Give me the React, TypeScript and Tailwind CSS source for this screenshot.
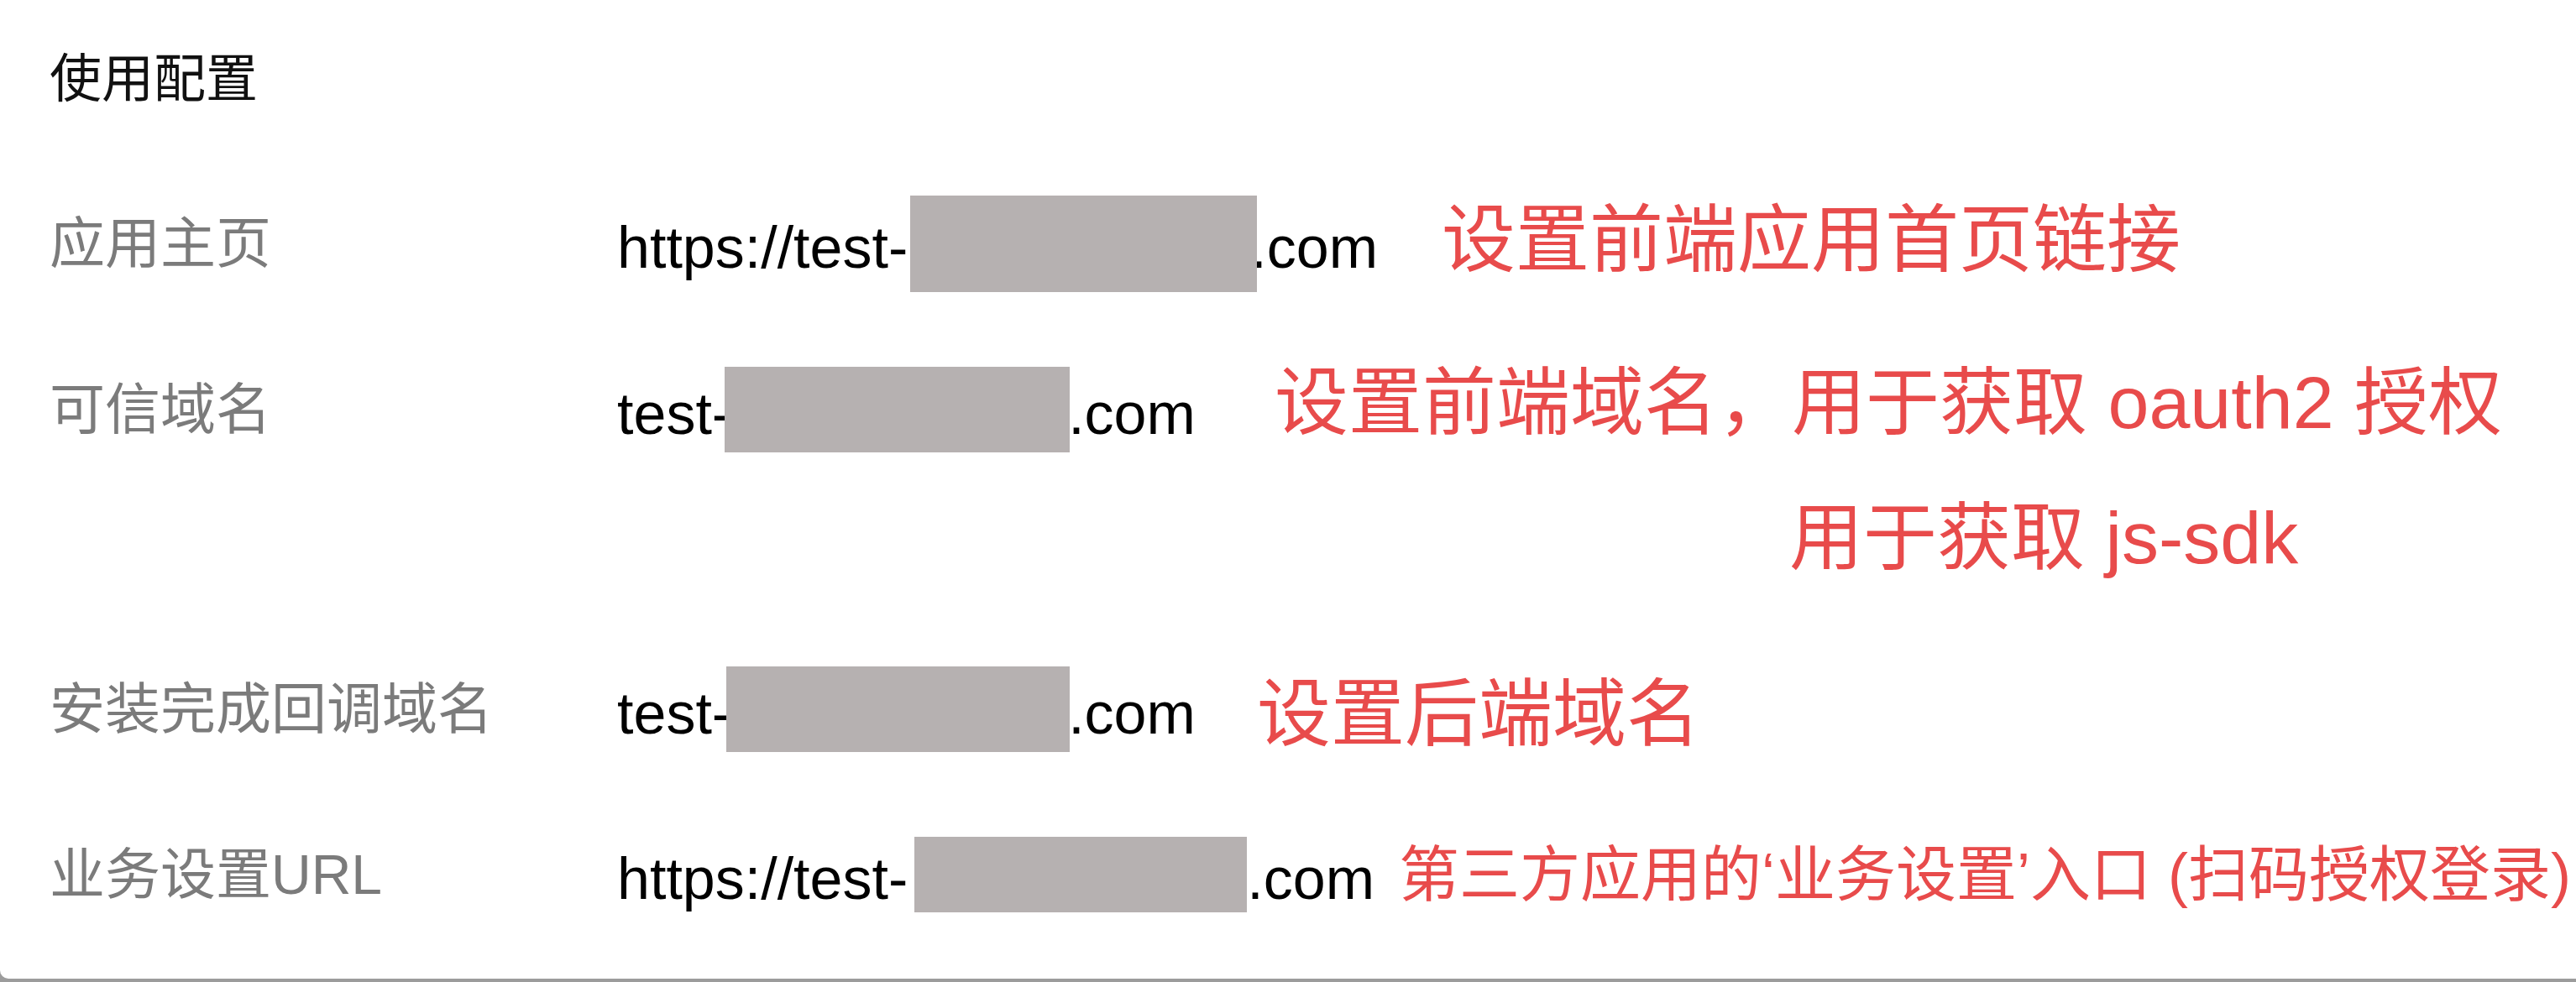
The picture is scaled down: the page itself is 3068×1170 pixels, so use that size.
import React from 'react';

const FONT = "font-['Liberation_Sans','Noto_Sans_CJK_SC',sans-serif]";

interface RowProps {
  label: string;
  prefix: string;
  mask: string;
  valueW: string;
  note: React.ReactNode;
  rowClass: string;
}

const ConfigRow: React.FC<RowProps> = ({ label, prefix, mask, valueW, note, rowClass }) => (
  <div className={`flex items-center h-[120px] ${rowClass}`}>
    <div className="w-[676px] shrink-0 text-[66px] leading-none text-[#7b7b7b]">{label}</div>
    <div className={`${valueW} shrink-0 flex items-center text-[70px] leading-none text-black`}>
      <span className="pt-[10px]">{prefix}</span>
      {/* masked domain */}
      <div className={`${mask} bg-[#b6b1b1] shrink-0 relative z-10`} />
      <span className="pt-[10px]">.com</span>
    </div>
    {note}
  </div>
);

export default function App() {
  return (
    <div className={`${FONT} w-[3068px] h-[1170px] bg-[#9c9c9c] overflow-hidden`}>
      <div className="h-[1166px] bg-white rounded-bl-[10px] pl-[59px] flex flex-col whitespace-nowrap">
        <div className="h-[190px] flex items-center text-[62px] leading-none text-[#111]">使用配置</div>

        <ConfigRow
          rowClass="mt-[40px]"
          label="应用主页"
          prefix="https://test-"
          mask="ml-[3px] -mr-[8px] w-[413px] h-[115px]"
          valueW="w-[982px]"
          note={<span className="text-[88px] leading-none text-[#e84b4b] -translate-y-[4px]">设置前端应用首页链接</span>}
        />

        <ConfigRow
          rowClass="mt-[78px]"
          label="可信域名"
          prefix="test-"
          mask="-ml-[8px] -mr-[2px] w-[411px] h-[102px]"
          valueW="w-[783px]"
          note={<span className="text-[88px] leading-none text-[#e84b4b] -translate-y-[8px]">设置前端域名，用于获取 oauth2 授权</span>}
        />

        <div className="flex items-center h-[120px] mt-[33px]">
          <div className="w-[2072px] shrink-0" />
          <span className="text-[88px] leading-none text-[#e84b4b]">用于获取 js-sdk</span>
        </div>

        <ConfigRow
          rowClass="mt-[84px]"
          label="安装完成回调域名"
          prefix="test-"
          mask="-ml-[6px] -mr-[2px] w-[409px] h-[102px]"
          valueW="w-[762px]"
          note={<span className="text-[88px] leading-none text-[#e84b4b] translate-y-[6px]">设置后端域名</span>}
        />

        <ConfigRow
          rowClass="mt-[77px]"
          label="业务设置URL"
          prefix="https://test-"
          mask="ml-[8px] w-[396px] h-[90px]"
          valueW="w-[931px]"
          note={<span className="text-[72px] leading-none text-[#e84b4b]">第三方应用的‘业务设置’入口 (扫码授权登录)</span>}
        />
      </div>
    </div>
  );
}
